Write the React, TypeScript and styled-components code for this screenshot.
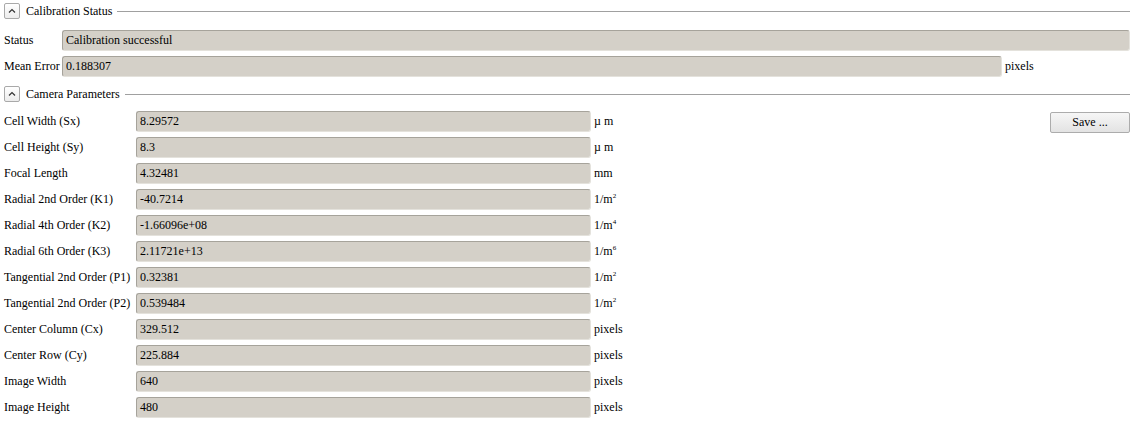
import * as React from "react";
import styled, { createGlobalStyle } from "styled-components";

const GlobalStyle = createGlobalStyle`
  html, body {
    margin: 0;
    padding: 0;
    background: #ffffff;
  }
  body {
    font-family: "Liberation Serif", "Times New Roman", serif;
    font-size: 12px;
    color: #000000;
  }
`;

const FIELD_BG = "#d4d0c8";

interface ParamType {
  label: string;
  value: string;
  unit: React.ReactNode;
}

const params: ParamType[] = [
  { label: "Cell Width (Sx)", value: "8.29572", unit: "µ m" },
  { label: "Cell Height (Sy)", value: "8.3", unit: "µ m" },
  { label: "Focal Length", value: "4.32481", unit: "mm" },
  { label: "Radial 2nd Order (K1)", value: "-40.7214", unit: <>1/m<sup>2</sup></> },
  { label: "Radial 4th Order (K2)", value: "-1.66096e+08", unit: <>1/m<sup>4</sup></> },
  { label: "Radial 6th Order (K3)", value: "2.11721e+13", unit: <>1/m<sup>6</sup></> },
  { label: "Tangential 2nd Order (P1)", value: "0.32381", unit: <>1/m<sup>2</sup></> },
  { label: "Tangential 2nd Order (P2)", value: "0.539484", unit: <>1/m<sup>2</sup></> },
  { label: "Center Column (Cx)", value: "329.512", unit: "pixels" },
  { label: "Center Row (Cy)", value: "225.884", unit: "pixels" },
  { label: "Image Width", value: "640", unit: "pixels" },
  { label: "Image Height", value: "480", unit: "pixels" },
];

const Page = styled.div`
  width: 1134px;
  height: 422px;
  box-sizing: border-box;
  padding: 3px 4px 0 4px;
  overflow: hidden;
`;

const SectionHeader = styled.div<{ $gapBelow: number }>`
  display: flex;
  align-items: center;
  height: 16px;
  margin-bottom: ${(p) => p.$gapBelow}px;
`;

const CollapseButton = styled.button`
  width: 16px;
  height: 16px;
  padding: 0;
  margin: 0 6px 0 0;
  box-sizing: border-box;
  border: 1px solid #a9a9a9;
  border-radius: 2px;
  background: linear-gradient(#ffffff, #ececec);
  display: flex;
  align-items: center;
  justify-content: center;
`;

const SectionTitle = styled.span`
  white-space: nowrap;
  margin-right: 5px;
`;

const SectionLine = styled.div`
  flex: 1;
  height: 1px;
  background: #a0a0a0;
`;

const Rows = styled.div<{ $gapBelow: number }>`
  display: flex;
  flex-direction: column;
  gap: 5px;
  margin-bottom: ${(p) => p.$gapBelow}px;
`;

const Row = styled.div`
  display: flex;
  align-items: center;
  height: 21px;
`;

const Label = styled.span<{ $width: number }>`
  width: ${(p) => p.$width}px;
  flex-shrink: 0;
  white-space: nowrap;
`;

const Field = styled.div<{ $width?: number }>`
  ${(p) => (p.$width ? `width: ${p.$width}px;` : "flex: 1;")}
  height: 21px;
  box-sizing: border-box;
  background: ${FIELD_BG};
  border: 1px solid #e4e2dc;
  border-top-color: #a6a39b;
  border-left-color: #a6a39b;
  border-radius: 3px;
  padding-left: 3px;
  display: flex;
  align-items: center;
  white-space: nowrap;
`;

const Unit = styled.span`
  margin-left: 3px;
  white-space: nowrap;
  & sup {
    font-size: 7px;
    vertical-align: 5px;
    line-height: 0;
  }
`;

const ParamsArea = styled.div`
  display: flex;
  justify-content: space-between;
  align-items: flex-start;
`;

const SaveButton = styled.button`
  width: 80px;
  height: 21px;
  margin-top: 1px;
  box-sizing: border-box;
  border: 1px solid #acacac;
  border-radius: 2px;
  background: linear-gradient(#f6f6f6, #e3e3e3);
  font-family: "Liberation Serif", "Times New Roman", serif;
  font-size: 12px;
  color: #000;
  padding: 0;
`;

function Chevron() {
  return (
    <svg width="10" height="10" viewBox="0 0 10 10">
      <path d="M2 6.5 L5 3.5 L8 6.5" fill="none" stroke="#333" strokeWidth="1.2" />
    </svg>
  );
}

function Section({ title, gapBelow }: { title: string; gapBelow: number }) {
  return (
    <SectionHeader $gapBelow={gapBelow}>
      <CollapseButton>
        <Chevron />
      </CollapseButton>
      <SectionTitle>{title}</SectionTitle>
      <SectionLine />
    </SectionHeader>
  );
}

export default function App() {
  return (
    <>
      <GlobalStyle />
      <Page>
        <Section title="Calibration Status" gapBelow={11} />
        <Rows $gapBelow={9}>
          <Row>
            <Label $width={58}>Status</Label>
            <Field>Calibration successful</Field>
          </Row>
          <Row>
            <Label $width={58}>Mean Error</Label>
            <Field $width={940}>0.188307</Field>
            <Unit>pixels</Unit>
          </Row>
        </Rows>
        <Section title="Camera Parameters" gapBelow={9} />
        <ParamsArea>
          <Rows $gapBelow={0}>
            {params.map((param) => (
              <Row key={param.label}>
                <Label $width={132}>{param.label}</Label>
                <Field $width={455}>{param.value}</Field>
                <Unit>{param.unit}</Unit>
              </Row>
            ))}
          </Rows>
          <SaveButton>Save ...</SaveButton>
        </ParamsArea>
      </Page>
    </>
  );
}
